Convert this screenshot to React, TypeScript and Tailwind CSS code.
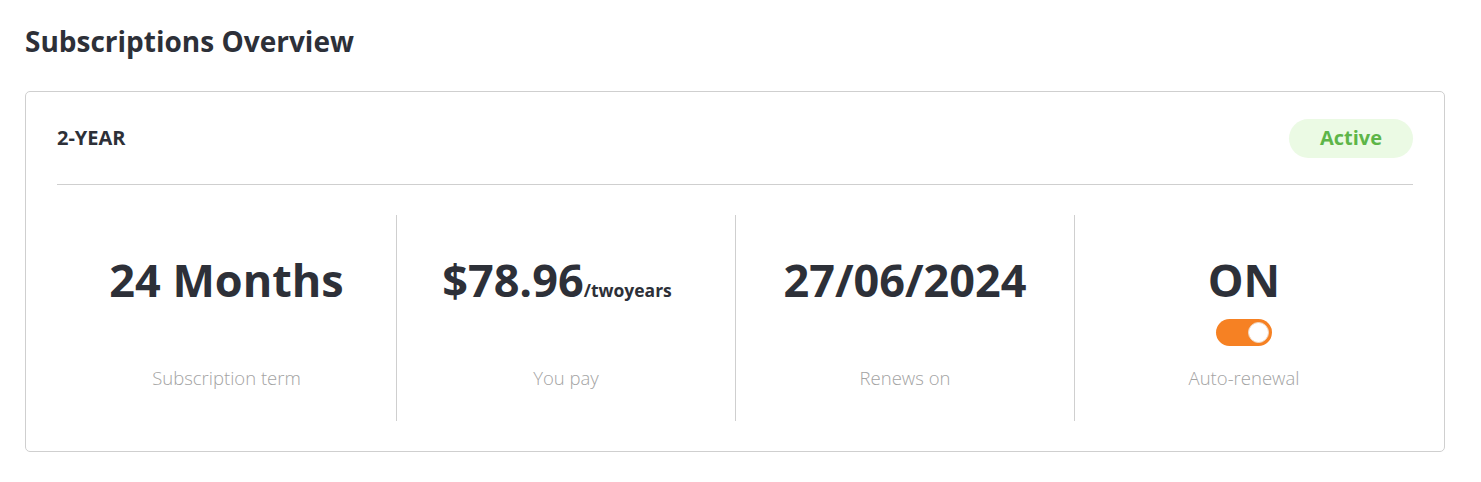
import { useState } from 'react';

const font = { fontFamily: '"Open Sans", "Noto Sans", sans-serif' };

export default function App() {
  const [auto, setAuto] = useState(true);

  return (
    <div style={font} className="w-[1481px] h-[482px] bg-white pl-[25px] pr-[36px] pt-[22px] text-[#2d3038]">
      <h1 className="text-[28px] font-bold leading-[38px]">Subscriptions Overview</h1>

      <div className="mt-[31px] rounded-[5px] border border-[#cfcfcf] px-[31px]">
        <div className="flex h-[93px] items-center justify-between border-b border-[#cfcfcf]">
          <span className="text-[20px] font-bold">2-YEAR</span>
          <span className="flex h-[39px] w-[124px] items-center justify-center rounded-full bg-[#ebfae4] text-[20px] font-bold text-[#5db548]">
            Active
          </span>
        </div>

        <div className="grid grid-cols-4 py-[30px]">
          <Stat label="Subscription term">
            <span>24 Months</span>
          </Stat>
          <Stat label="You pay" divider>
            <span>$78.96</span>
            <span className="text-[17.5px] mr-[18px]">/twoyears</span>
          </Stat>
          <Stat label="Renews on" divider>
            <span>27/06/2024</span>
          </Stat>
          <Stat label="Auto-renewal" divider>
            <span>{auto ? 'ON' : 'OFF'}</span>
            <Toggle on={auto} onChange={setAuto} />
          </Stat>
        </div>
      </div>
    </div>
  );
}

function Stat({ label, divider, children }: { label: string; divider?: boolean; children: React.ReactNode }) {
  const [main, extra] = Array.isArray(children) ? children : [children, null];
  const isToggle = label === 'Auto-renewal';
  return (
    <div className={`flex h-[206px] flex-col items-center pt-[37px] pb-[31px] ${divider ? 'border-l border-[#cfcfcf]' : ''}`}>
      {isToggle ? (
        <>
          <div className="h-[56px] text-[45px] font-bold leading-[56px]">{main}</div>
          <div className="mt-[11px]">{extra}</div>
        </>
      ) : (
        <div className="flex h-[56px] items-baseline text-[45px] font-bold leading-[56px]">
          {main}
          {extra}
        </div>
      )}
      <div className="mt-auto text-[18.5px] font-light leading-[24px] text-[#a3a3a3]">{label}</div>
    </div>
  );
}

function Toggle({ on, onChange }: { on: boolean; onChange: (v: boolean) => void }) {
  return (
    <button
      onClick={() => onChange(!on)}
      className={`flex h-[27px] w-[56px] items-center rounded-full px-[3px] ${on ? 'justify-end bg-[#f68123]' : 'justify-start bg-[#d5d5d5]'}`}
    >
      <span className="h-[21px] w-[21px] rounded-full border border-[#f0d8c4] bg-white" />
    </button>
  );
}
